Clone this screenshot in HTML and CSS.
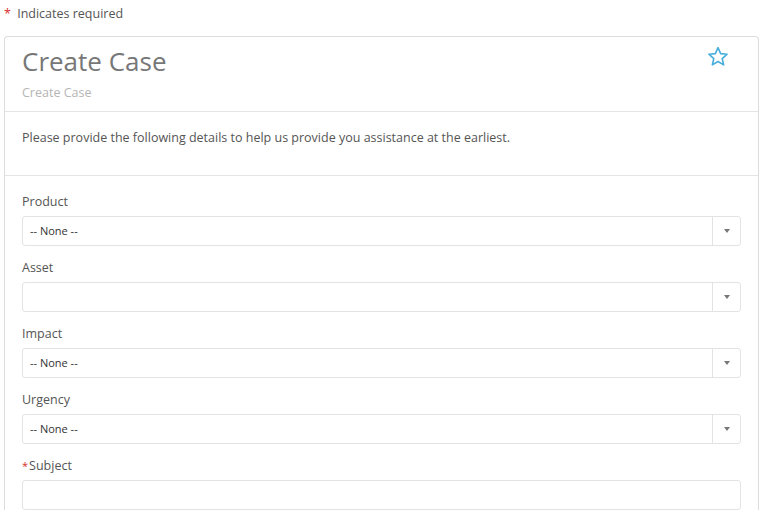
FILE: index.html
```html
<!DOCTYPE html>
<html lang="en">
<head>
<meta charset="UTF-8">
<meta name="viewport" content="width=device-width, initial-scale=1.0">
<title>Create Case</title>
<link rel="stylesheet" href="styles.css">
</head>
<body>
<div class="required-note"><span class="mark">*</span> Indicates required</div>

<div class="panel">
    <div class="panel-header">
        <div class="titles">
            <h1>Create Case</h1>
            <div class="subtitle">Create Case</div>
        </div>
        <svg class="star" width="22" height="21" viewBox="0 0 24 23">
            <path d="M12 1.8l2.9 6.6 7.1 0.6-5.4 4.7 1.6 7-6.2-3.7-6.2 3.7 1.6-7L2 9l7.1-0.6z" fill="none" stroke="#4aaedc" stroke-width="1.8" stroke-linejoin="round"/>
        </svg>
    </div>

    <div class="panel-intro">
        Please provide the following details to help us provide you assistance at the earliest.
    </div>

    <form class="panel-form">
        <div class="field">
            <label>Product</label>
            <div class="select"><span class="value">-- None --</span><span class="arrow"></span></div>
        </div>
        <div class="field">
            <label>Asset</label>
            <div class="select"><span class="value"></span><span class="arrow"></span></div>
        </div>
        <div class="field">
            <label>Impact</label>
            <div class="select"><span class="value">-- None --</span><span class="arrow"></span></div>
        </div>
        <div class="field">
            <label>Urgency</label>
            <div class="select"><span class="value">-- None --</span><span class="arrow"></span></div>
        </div>
        <div class="field">
            <label><span class="mark small">*</span>Subject</label>
            <div class="text-input"></div>
        </div>
    </form>
</div>
</body>
</html>
```

FILE: styles.css
```css
body {
    font-family: "Open Sans", Arial, sans-serif;
    font-size: 12.5px;
    color: #555;
    margin: 0;
    padding: 0;
    background-color: #fff;
}
.mark {
    color: #d9302c;
    margin-right: 3px;
}
.mark.small {
    font-size: 11px;
    margin-right: 1px;
}
.required-note {
    padding: 5px 0 0 4px;
    height: 36px;
    box-sizing: border-box;
    line-height: 18px;
}
.panel {
    margin-left: 4px;
    width: 755px;
    border: 1px solid #dddddd;
    border-bottom: none;
    border-radius: 4px 4px 0 0;
    box-sizing: border-box;
}
.panel-header {
    display: flex;
    justify-content: space-between;
    padding: 7px 29px 0 17px;
    height: 75px;
    box-sizing: border-box;
    border-bottom: 1px solid #e5e5e5;
}
.panel-header h1 {
    margin: 0;
    font-size: 26px;
    font-weight: normal;
    color: #777;
    line-height: 34px;
}
.subtitle {
    color: #b5b5b5;
    margin-top: 6px;
    line-height: 18px;
}
.star {
    margin-top: 2px;
}
.panel-intro {
    height: 64px;
    padding: 17px 17px 0;
    line-height: 18px;
    box-sizing: border-box;
    border-bottom: 1px solid #e5e5e5;
    color: #555;
}
.panel-form {
    padding: 17px 17px 0;
    background-color: #fff;
}
.field {
    margin-bottom: 13px;
}
.field label {
    display: block;
    line-height: 18px;
    margin-bottom: 5px;
    color: #555;
}
.select,
.text-input {
    display: flex;
    height: 30px;
    width: 719px;
    border: 1px solid #e3e3e3;
    border-radius: 3px;
    background-color: #fff;
    box-sizing: border-box;
}
.select .value {
    flex: 1;
    padding-left: 7px;
    line-height: 28px;
    font-size: 11px;
    color: #333;
}
.select .arrow {
    width: 27px;
    border-left: 1px solid #e3e3e3;
    position: relative;
}
.select .arrow::after {
    content: "";
    position: absolute;
    left: 11px;
    top: 12px;
    border-left: 3px solid transparent;
    border-right: 3px solid transparent;
    border-top: 4px solid #777;
}
```
